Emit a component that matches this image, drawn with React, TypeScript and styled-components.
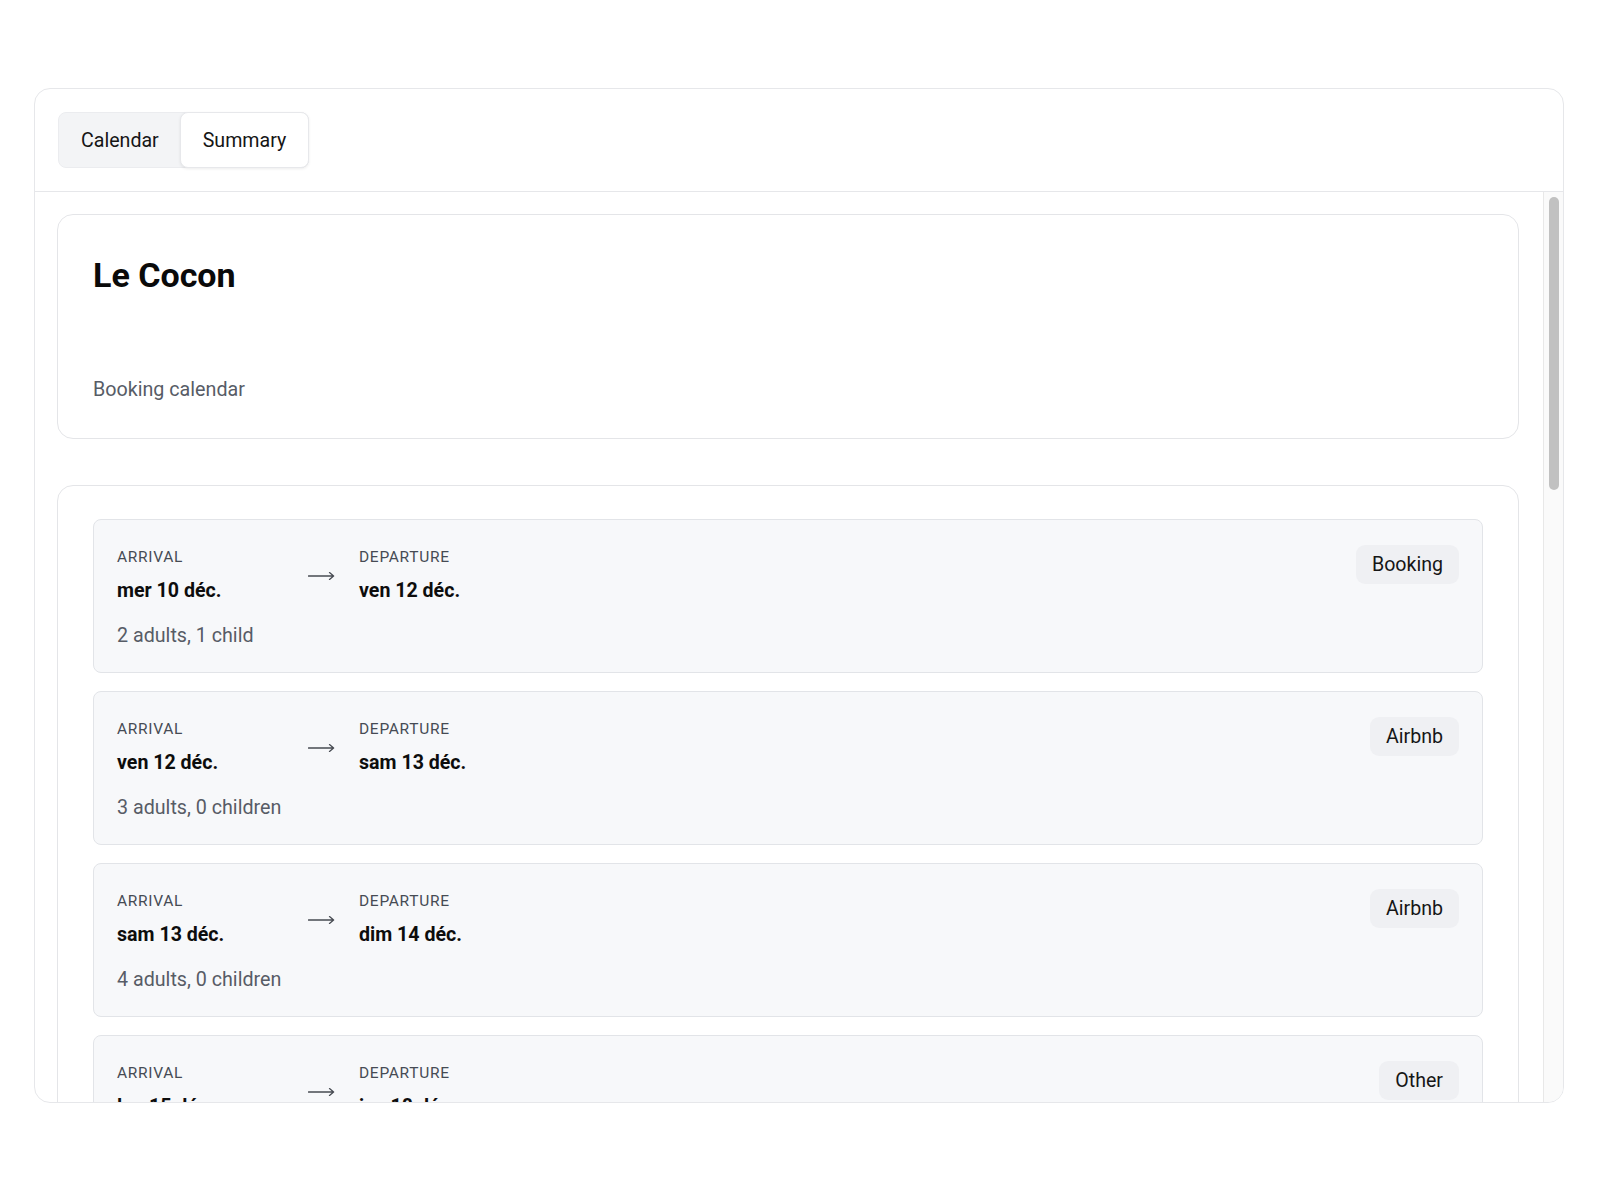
import React from "react";
import styled, { createGlobalStyle } from "styled-components";

const GlobalStyle = createGlobalStyle`
  html, body {
    margin: 0;
    padding: 0;
    background: #ffffff;
    font-family: Roboto, "Liberation Sans", Arial, sans-serif;
    color: #111111;
  }
  * { box-sizing: border-box; }
`;

const Page = styled.div`
  padding: 88px 36px 0 34px;
`;

const Shell = styled.div`
  width: 1530px;
  height: 1015px;
  border: 1px solid #e6e7ea;
  border-radius: 16px;
  display: flex;
  flex-direction: column;
  overflow: hidden;
  background: #ffffff;
`;

const Header = styled.div`
  flex: none;
  padding: 23px 23px 23px;
  border-bottom: 1px solid #e6e7ea;
`;

const TabList = styled.div`
  display: inline-flex;
  height: 56px;
  background: #f3f4f6;
  border: 1px solid #ebecef;
  border-radius: 8px;
`;

const Tab = styled.button<{ $active?: boolean }>`
  height: 56px;
  margin: -1px ${(p) => (p.$active ? "-1px" : "0")} -1px 0;
  padding: ${(p) => (p.$active ? "0 22px" : "0 20px 0 21px")};
  font-family: Roboto, "Liberation Sans", Arial, sans-serif;
  font-size: 19.6px;
  color: #151515;
  background: ${(p) => (p.$active ? "#ffffff" : "transparent")};
  border: 1px solid ${(p) => (p.$active ? "#e7e8eb" : "transparent")};
  border-radius: 8px;
  box-shadow: ${(p) => (p.$active ? "0 1px 3px rgba(0,0,0,0.08)" : "none")};
  cursor: pointer;
`;

const Body = styled.div`
  flex: 1;
  min-height: 0;
  display: flex;
`;

const Scroll = styled.div`
  flex: 1;
  min-width: 0;
  overflow-y: auto;
  scrollbar-width: none;
  padding: 22px 24px 22px 22px;
  display: flex;
  flex-direction: column;
  gap: 46px;

  &::-webkit-scrollbar {
    display: none;
  }
`;

const ScrollTrack = styled.div`
  flex: none;
  width: 20px;
  padding: 5px;
  background: #fafafa;
  border-left: 1px solid #e8e8e8;
`;

const ScrollThumb = styled.div`
  width: 10px;
  height: 293px;
  border-radius: 5px;
  background: #c1c1c1;
`;

const Card = styled.section<{ $pad: string }>`
  flex: none;
  border: 1px solid #e4e5e8;
  border-radius: 16px;
  padding: ${(p) => p.$pad};
  background: #ffffff;
`;

const Title = styled.h1`
  margin: 0 0 81px;
  font-size: 34px;
  line-height: 40px;
  font-weight: 700;
  color: #0a0a0a;
`;

const Subtitle = styled.p`
  margin: 0;
  font-size: 19.7px;
  line-height: 27px;
  color: #575c66;
`;

const List = styled.div`
  display: flex;
  flex-direction: column;
  gap: 18px;
`;

const BookingCard = styled.div`
  display: flex;
  justify-content: space-between;
  align-items: flex-start;
  padding: 26px 23px 23px 23px;
  background: #f7f8fa;
  border: 1px solid #e2e4e8;
  border-radius: 8px;
  height: 154px;
`;

const Left = styled.div`
  display: flex;
  flex-direction: column;
`;

const DatesRow = styled.div`
  display: flex;
  align-items: center;
  gap: 24px;
`;

const DateCol = styled.div<{ $min?: number }>`
  display: flex;
  flex-direction: column;
  min-width: ${(p) => (p.$min ? `${p.$min}px` : "0")};
`;

const Label = styled.span`
  font-size: 15.5px;
  line-height: 22px;
  font-weight: 400;
  letter-spacing: 0.045em;
  text-transform: uppercase;
  color: #464b54;
  margin-bottom: 9px;
`;

const DateText = styled.span`
  font-size: 19.6px;
  line-height: 28px;
  font-weight: 700;
  color: #0d0d0d;
`;

const Guests = styled.div`
  margin-top: 17px;
  font-size: 19.7px;
  line-height: 28px;
  color: #575c66;
`;

const Badge = styled.span`
  flex: none;
  margin-top: -1px;
  padding: 5px 16px;
  font-size: 19.6px;
  line-height: 29px;
  color: #161616;
  background: #eff0f3;
  border-radius: 9px;
`;

const ArrowSvg = styled.svg`
  flex: none;
  display: block;
`;

const Arrow = () => (
  <ArrowSvg width="27" height="10" viewBox="0 0 27 10" fill="none">
    <path
      d="M0.5 5H25.5M21.5 1.6L25.6 5L21.5 8.4"
      stroke="#474b52"
      strokeWidth="1.3"
      strokeLinecap="round"
      strokeLinejoin="round"
    />
  </ArrowSvg>
);

type Booking = {
  arrival: string;
  departure: string;
  guests: string;
  source: string;
};

const bookings: Booking[] = [
  { arrival: "mer 10 déc.", departure: "ven 12 déc.", guests: "2 adults, 1 child", source: "Booking" },
  { arrival: "ven 12 déc.", departure: "sam 13 déc.", guests: "3 adults, 0 children", source: "Airbnb" },
  { arrival: "sam 13 déc.", departure: "dim 14 déc.", guests: "4 adults, 0 children", source: "Airbnb" },
  { arrival: "lun 15 déc.", departure: "jeu 18 déc.", guests: "2 adults, 0 children", source: "Other" },
  { arrival: "ven 19 déc.", departure: "dim 21 déc.", guests: "2 adults, 2 children", source: "Booking" },
  { arrival: "lun 22 déc.", departure: "mer 24 déc.", guests: "3 adults, 1 child", source: "Airbnb" },
  { arrival: "mer 24 déc.", departure: "sam 27 déc.", guests: "4 adults, 2 children", source: "Booking" },
  { arrival: "sam 27 déc.", departure: "lun 29 déc.", guests: "2 adults, 0 children", source: "Airbnb" },
  { arrival: "mar 30 déc.", departure: "ven 2 janv.", guests: "5 adults, 1 child", source: "Other" },
  { arrival: "sam 3 janv.", departure: "lun 5 janv.", guests: "2 adults, 0 children", source: "Booking" },
  { arrival: "ven 9 janv.", departure: "dim 11 janv.", guests: "3 adults, 0 children", source: "Airbnb" },
  { arrival: "ven 16 janv.", departure: "dim 18 janv.", guests: "2 adults, 1 child", source: "Booking" },
  { arrival: "ven 23 janv.", departure: "lun 26 janv.", guests: "4 adults, 0 children", source: "Airbnb" },
  { arrival: "ven 30 janv.", departure: "dim 1 févr.", guests: "2 adults, 0 children", source: "Other" },
];

export default function App() {
  return (
    <>
      <GlobalStyle />
      <Page>
        <Shell>
          <Header>
            <TabList>
              <Tab>Calendar</Tab>
              <Tab $active>Summary</Tab>
            </TabList>
          </Header>
          <Body>
            <Scroll>
              <Card $pad="40px 35px 35px">
                <Title>Le Cocon</Title>
                <Subtitle>Booking calendar</Subtitle>
              </Card>
              <Card $pad="33px 35px">
                <List>
                  {bookings.map((b, i) => (
                    <BookingCard key={i}>
                      <Left>
                        <DatesRow>
                          <DateCol $min={167}>
                            <Label>Arrival</Label>
                            <DateText>{b.arrival}</DateText>
                          </DateCol>
                          <Arrow />
                          <DateCol>
                            <Label>Departure</Label>
                            <DateText>{b.departure}</DateText>
                          </DateCol>
                        </DatesRow>
                        <Guests>{b.guests}</Guests>
                      </Left>
                      <Badge>{b.source}</Badge>
                    </BookingCard>
                  ))}
                </List>
              </Card>
            </Scroll>
            <ScrollTrack>
              <ScrollThumb />
            </ScrollTrack>
          </Body>
        </Shell>
      </Page>
    </>
  );
}
